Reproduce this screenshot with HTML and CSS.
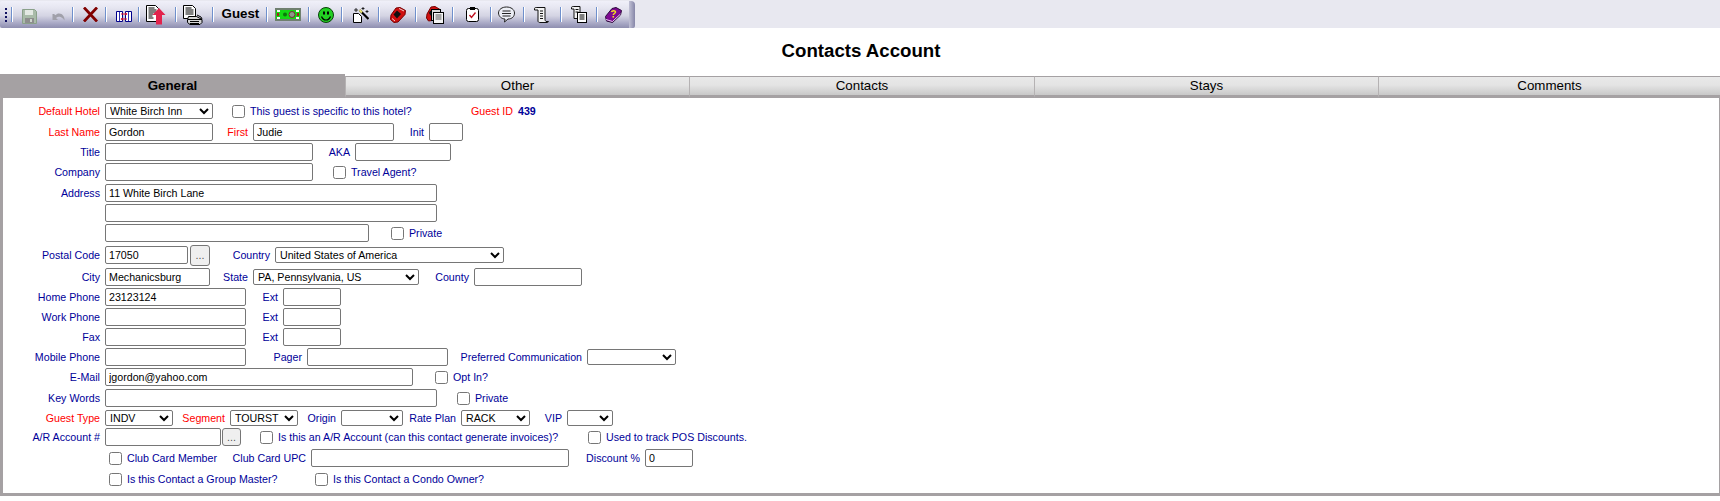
FILE: index.html
```html
<!DOCTYPE html>
<html lang="en">
<head>
<meta charset="utf-8">
<title>Contacts Account</title>
<link rel="stylesheet" href="styles.css">
</head>
<body>
<header class="topband">
  <nav class="toolbar">
    <span class="grip"><i></i><i></i><i></i><i></i></span>
    <span class="sep"></span>
    <span class="tool w59 spread">
      <svg class="low" width="15" height="15" viewBox="0 0 15 15"><path d="M.5.500h12l2 2v12H.5z" fill="#a9bba9" stroke="#8aa08a"/><rect x="3" y="1" width="8" height="5" fill="#e3e9e3"/><rect x="3" y="9" width="9" height="5" fill="#8d8d8d"/><rect x="8" y="10" width="2" height="3" fill="#cfd6cf"/></svg>
      <svg class="low" width="14" height="9" viewBox="0 0 14 9"><path d="M.5 2v6h5.500L4 6c2.500-2 6-1.500 8.500 2.500.5-3.500-2-7-5.500-7-1.500 0-2.500.6-3.500 1.800L2 2z" fill="#a0a0aa"/></svg>
    </span>
    <span class="sep"></span>
    <span class="tool w31 nudge-r">
      <svg width="15" height="15" viewBox="0 0 15 15"><path d="M1 .5l13 14M14 .5l-13 14" stroke="#800000" stroke-width="2.800" fill="none"/></svg>
    </span>
    <span class="sep"></span>
    <span class="tool w31 nudge-r">
      <svg class="low" width="16" height="11" viewBox="0 0 16 11"><path d="M.5.500h6v10h-6zM9.500.5h6v10h-6z" fill="#fff" stroke="#00008b"/><path d="M3.500 1v9M12.500 1v9" stroke="#3030b0"/><path d="M5 3h6M5 8h6" stroke="#e0102a"/><path d="M9.500 1.500l2 1.500-2 1.500zM6.500 6.500l-2 1.500 2 1.500z" fill="#e0102a"/></svg>
    </span>
    <span class="sep"></span>
    <span class="tool w35 nudge">
      <svg width="20" height="20" viewBox="0 0 20 20"><path d="M.5.500h9l3 3v13H.5z" fill="#fff" stroke="#000"/><path d="M2.500 3h6M2.500 5h8M2.500 7h8M2.500 9h5M2.500 11h4M2.500 13h5" stroke="#000"/><path d="M13 3l6.500 7H16v9.500h-6V10H6.500z" fill="#e2234c"/></svg>
    </span>
    <span class="sep"></span>
    <span class="tool w35 nudge-s">
      <svg width="20" height="20" viewBox="0 0 20 20"><path d="M.5.500h9l3 3v10H.5z" fill="#fff" stroke="#000"/><path d="M2.500 3h6M2.500 5h8M2.500 7h8M2.500 9h8" stroke="#000"/><path d="M5.500 11.500h8l5.500 3v3l-2 2H7l-2.500-2v-3z" fill="#d4d4d4" stroke="#000"/><path d="M5 14.500h14M7 16.500h9M7 18.500h9" stroke="#000"/><path d="M14 10l4 2 1 2" fill="none" stroke="#000"/></svg>
    </span>
    <span class="sep"></span>
    <span class="tool w52 guest">Guest</span>
    <span class="sep"></span>
    <span class="tool w40">
      <svg width="26" height="13" viewBox="0 0 26 13"><rect width="26" height="13" fill="#6f7f6f"/><rect x="1" y="2" width="24" height="9" fill="#14d814"/><path d="M2 2h3v2H2zM21 2h3v2h-3zM2 9h3v2H2zM21 9h3v2h-3z" fill="#f4f4f4"/><path d="M2 5h2v3H2zM22 5h2v3h-2z" fill="#a02020"/><circle cx="17" cy="6.500" r="3" fill="#8a9a8a" stroke="#703030"/><circle cx="10" cy="6.500" r="2" fill="#0a7a0a"/></svg>
    </span>
    <span class="sep"></span>
    <span class="tool w31">
      <svg width="16" height="16" viewBox="0 0 16 16"><circle cx="8" cy="8" r="7.500" fill="#22d022" stroke="#0a400a"/><rect x="5" y="4.500" width="2" height="3" fill="#000"/><rect x="9" y="4.500" width="2" height="3" fill="#000"/><path d="M3.500 9.500c1 2.500 2.500 3.500 4.500 3.500s3.500-1 4.500-3.500" fill="none" stroke="#000" stroke-width="1.200"/></svg>
    </span>
    <span class="sep"></span>
    <span class="tool w35">
      <svg width="16" height="16" viewBox="0 0 16 16"><path d="M.5 6.500h5l3 3v6h-8z" fill="#fff" stroke="#000"/><path d="M6.500 3l9 9" stroke="#000" stroke-width="2.200"/><path d="M6.500 3l2.500 2.500" stroke="#e8e070" stroke-width="2.200"/><path d="M3 1v4M1 3h4M10 0v3M8.500 1.500h3M14 3v3M12.500 4.500h3" stroke="#000" stroke-width=".8"/></svg>
    </span>
    <span class="sep"></span>
    <span class="tool w35">
      <svg width="16" height="16" viewBox="0 0 16 16"><path d="M6 1L10 .5l5.500 3-.5 4-7 7.500-4 .5-3.500-3 .5-4.500z" fill="#d01010" stroke="#700"/><path d="M7 3.500l4 3.500-4 4.500-3.500-4z" fill="#111"/><path d="M9 1.500l5 2.500M2 11.500l3 2.500" stroke="#fff" stroke-width=".8"/></svg>
    </span>
    <span class="sep"></span>
    <span class="tool w35">
      <svg width="18" height="18" viewBox="0 0 18 18"><path d="M5 1L9 .5l5 3-1 4-7 7-3.500.5L.5 12 1 8z" fill="#d01010" stroke="#700"/><path d="M4 5l3-1 1 3-3 3-2-3z" fill="#111"/><rect x="5.500" y="3.500" width="9" height="11" fill="#d8d8d8" stroke="#000"/><rect x="7.500" y="6.500" width="10" height="11" fill="#f4f4f4" stroke="#000"/><path d="M9.500 9h6M9.500 11h6M9.500 13h6" stroke="#555"/></svg>
    </span>
    <span class="sep"></span>
    <span class="tool w36">
      <svg width="13" height="15" viewBox="0 0 13 15"><rect x=".5" y="1.500" width="12" height="13" rx="2" fill="#fff" stroke="#000"/><rect x="4" y="0" width="5" height="3" fill="#000"/><path d="M3.500 8l2 2.500 4-5" fill="none" stroke="#c01020" stroke-width="1.400"/></svg>
    </span>
    <span class="sep"></span>
    <span class="tool w31 nudge-s">
      <svg width="17" height="17" viewBox="0 0 17 17"><path d="M8.500 1C4 1 .5 3.500.5 7s3.500 6 6.500 6l-.5 3 3.500-3c4 0 6.500-2.500 6.500-6s-3.500-6-8-6z" fill="#eceef5" stroke="#222"/><path d="M4.500 5h8M4 7.500h9M4.500 10h8" stroke="#222"/></svg>
    </span>
    <span class="sep"></span>
    <span class="tool w35 nudge-s">
      <svg width="15" height="16" viewBox="0 0 15 16"><path d="M.5 1.500C.5.500 2 .5 3 .5h8v12c0 1 .5 1.500 1 2h2.500c0 .5-.5 1-1.500 1H6c-1 0-2-.5-2-1.500V3H.5z" fill="#f4f4f4" stroke="#111"/><path d="M6 4h3M6 6.500h3M6 9h3M6 11.500h3" stroke="#111"/></svg>
    </span>
    <span class="sep"></span>
    <span class="tool w34">
      <svg width="16" height="17" viewBox="0 0 16 17"><path d="M.5 1.500C.5.500 2 .5 3 .5h6v12H3V3H.5z" fill="#f4f4f4" stroke="#111"/><path d="M4.500 3.500h3M4.500 6h3" stroke="#111"/><rect x="6.500" y="6.500" width="9" height="10" fill="#fff" stroke="#000"/><path d="M8.500 9h5M8.500 11h5M8.500 13h5" stroke="#000"/></svg>
    </span>
    <span class="sep"></span>
    <span class="tool w31">
      <svg width="17" height="16" viewBox="0 0 17 16"><path d="M7 1.500L11 .5l5.500 3-1 4.500L7.500 15.500 1.500 14 .5 9.500z" fill="#7e0a92" stroke="#2a0a3a"/><path d="M1 12.500l6.500 2L15.500 7" fill="none" stroke="#e8c8f0"/><path d="M6.500 5c.5-1.500 4-1.800 4 0 0 1.500-2.200 1.500-2.200 3" fill="none" stroke="#f5e020" stroke-width="1.500"/><rect x="7.500" y="9" width="1.600" height="1.600" fill="#f5e020"/></svg>
    </span>
    <span class="endcap"></span>
  </nav>
</header>

<h1 class="title">Contacts Account</h1>

<div class="tabs">
  <div class="tab active">General</div>
  <div class="tab">Other</div>
  <div class="tab">Contacts</div>
  <div class="tab">Stays</div>
  <div class="tab">Comments</div>
</div>

<form class="panel">
  <div class="row">
    <label class="cap req w97">Default Hotel</label>
    <select class="w108"><option>White Birch Inn</option></select>
    <input type="checkbox" class="ml19">
    <span class="text ml5 w162">This guest is specific to this hotel?</span>
    <label class="cap req w101">Guest ID</label>
    <span class="value">439</span>
  </div>
  <div class="row mt1">
    <label class="cap req w97">Last Name</label>
    <input type="text" class="w108" value="Gordon">
    <label class="cap req w35">First</label>
    <input type="text" class="w141" value="Judie">
    <label class="cap w30">Init</label>
    <input type="text" class="w34">
  </div>
  <div class="row">
    <label class="cap w97">Title</label>
    <input type="text" class="w208">
    <label class="cap w37">AKA</label>
    <input type="text" class="w96">
  </div>
  <div class="row">
    <label class="cap w97">Company</label>
    <input type="text" class="w208">
    <input type="checkbox" class="ml20">
    <span class="text ml5">Travel Agent?</span>
  </div>
  <div class="row mt1">
    <label class="cap w97">Address</label>
    <input type="text" class="w332" value="11 White Birch Lane">
  </div>
  <div class="row">
    <span class="cap w97"></span>
    <input type="text" class="w332">
  </div>
  <div class="row">
    <span class="cap w97"></span>
    <input type="text" class="w264">
    <input type="checkbox" class="ml22">
    <span class="text ml5">Private</span>
  </div>
  <div class="row mt2">
    <label class="cap w97">Postal Code</label>
    <input type="text" class="w83" value="17050">
    <button type="button" class="more ml2 w20 tall">...</button>
    <label class="cap w60">Country</label>
    <select class="w229"><option>United States of America</option></select>
  </div>
  <div class="row mt2">
    <label class="cap w97">City</label>
    <input type="text" class="w105" value="Mechanicsburg">
    <label class="cap w38">State</label>
    <select class="w166"><option>PA, Pennsylvania, US</option></select>
    <label class="cap w50">County</label>
    <input type="text" class="w108">
  </div>
  <div class="row">
    <label class="cap w97">Home Phone</label>
    <input type="text" class="w141" value="23123124">
    <label class="cap w32">Ext</label>
    <input type="text" class="w58">
  </div>
  <div class="row">
    <label class="cap w97">Work Phone</label>
    <input type="text" class="w141">
    <label class="cap w32">Ext</label>
    <input type="text" class="w58">
  </div>
  <div class="row">
    <label class="cap w97">Fax</label>
    <input type="text" class="w141">
    <label class="cap w32">Ext</label>
    <input type="text" class="w58">
  </div>
  <div class="row">
    <label class="cap w97">Mobile Phone</label>
    <input type="text" class="w141">
    <label class="cap w56">Pager</label>
    <input type="text" class="w141">
    <label class="cap w134">Preferred Communication</label>
    <select class="w89"><option></option></select>
  </div>
  <div class="row">
    <label class="cap w97">E-Mail</label>
    <input type="text" class="w308" value="jgordon@yahoo.com">
    <input type="checkbox" class="ml22">
    <span class="text ml5">Opt In?</span>
  </div>
  <div class="row mt1">
    <label class="cap w97">Key Words</label>
    <input type="text" class="w332">
    <input type="checkbox" class="ml20">
    <span class="text ml5">Private</span>
  </div>
  <div class="row short mt1">
    <label class="cap req w97">Guest Type</label>
    <select class="w68"><option>INDV</option></select>
    <label class="cap req w52">Segment</label>
    <select class="w68"><option>TOURST</option></select>
    <label class="cap w38">Origin</label>
    <select class="w62"><option></option></select>
    <label class="cap w53">Rate Plan</label>
    <select class="w69"><option>RACK</option></select>
    <label class="cap w32">VIP</label>
    <select class="w46"><option></option></select>
  </div>
  <div class="row">
    <label class="cap w97">A/R Account #</label>
    <input type="text" class="w116">
    <button type="button" class="more ml1 w19">...</button>
    <input type="checkbox" class="ml19">
    <span class="text ml5 w280">Is this an A/R Account (can this contact generate invoices)?</span>
    <input type="checkbox" class="ml30">
    <span class="text ml5">Used to track POS Discounts.</span>
  </div>
  <div class="row mt1">
    <input type="checkbox" class="ml106">
    <span class="text ml5 w90">Club Card Member</span>
    <label class="cap w89">Club Card UPC</label>
    <input type="text" class="w258">
    <label class="cap w71">Discount %</label>
    <input type="text" class="w48" value="0">
  </div>
  <div class="row mt1">
    <input type="checkbox" class="ml106">
    <span class="text ml5 w151">Is this Contact a Group Master?</span>
    <input type="checkbox" class="ml37">
    <span class="text ml5">Is this Contact a Condo Owner?</span>
  </div>
</form>
</body>
</html>
```

FILE: styles.css
```css
* { box-sizing: border-box; }

html, body {
  margin: 0;
  background: #fff;
  overflow: hidden;
}

body {
  font-family: "Liberation Sans", Arial, sans-serif;
  font-size: 10.67px;
  color: #000099;
}

/* toolbar */
.topband {
  height: 28px;
  padding-top: 1px;
  background: #e8e8f0;
}

.toolbar {
  display: flex;
  align-items: center;
  width: 635px;
  height: 27px;
  background: linear-gradient(#f0f0f9 0, #e6e6f1 25%, #d4d4e3 55%, #a4a4c2 85%, #8f8fb0 100%);
  border-radius: 2px;
}

.grip {
  display: flex;
  flex-direction: column;
  gap: 2px;
  width: 13px;
  padding-left: 5px;
}

.grip i {
  width: 2px;
  height: 2px;
  background: #101060;
}

.sep {
  flex: none;
  width: 2px;
  height: 15px;
  background: #6f90cc;
  border-right: 1px solid #fff;
}

.tool {
  flex: none;
  display: flex;
  align-items: center;
  justify-content: center;
  height: 27px;
}

.tool svg { display: block; }

.tool svg.low { margin-top: 3px; }

.spread {
  justify-content: flex-start;
  gap: 15px;
  padding-left: 9px;
}

.nudge { padding-right: 4px; }
.nudge-s { padding-right: 3px; }
.nudge-r { padding-left: 2px; }

.guest {
  font-size: 13.33px;
  font-weight: bold;
  color: #000;
  padding-bottom: 2px;
}

.endcap {
  margin-left: auto;
  width: 7px;
  height: 27px;
  background: linear-gradient(90deg, #c0c0d4, #8686a8);
  border-radius: 0 4px 4px 0;
}

.w31 { width: 31px; }
.w34 { width: 34px; }
.w35 { width: 35px; }
.w36 { width: 36px; }
.w40 { width: 40px; }
.w52 { width: 52px; }
.w59 { width: 59px; }

/* heading */
.title {
  margin: 0;
  height: 46px;
  padding-left: 2px;
  font-size: 18.67px;
  line-height: 45px;
  font-weight: bold;
  text-align: center;
  color: #000;
}

/* tabs */
.tabs {
  display: grid;
  grid-template-columns: 345px 344px 345px 344px 1fr;
  height: 24px;
}

.tab {
  margin-top: 2px;
  padding-bottom: 1px;
  font-size: 13.33px;
  line-height: 17px;
  text-align: center;
  color: #000;
  background: linear-gradient(#e9e9e9, #e4e4e4 45%, #c8c8c8);
  border-top: 1px solid #a5a1a3;
  border-bottom: 3px solid #a5a1a3;
  border-left: 1px solid #b5b2b3;
}

.tab.active {
  margin-top: 0;
  padding-top: 3px;
  font-weight: bold;
  background: #a5a1a3;
  border: 0;
}

/* form */
.panel {
  display: flex;
  flex-direction: column;
  padding: 3px 0 4px;
  border: solid #a5a1a3;
  border-width: 0 1px 3px 3px;
}

.row {
  display: flex;
  align-items: center;
  height: 20px;
}

.row.short { height: 18px; }

.mt1 { margin-top: 1px; }
.mt2 { margin-top: 2px; }

.cap {
  flex: none;
  margin-right: 5px;
  text-align: right;
  white-space: nowrap;
}

.req { color: #f00; }

.text {
  flex: none;
  white-space: nowrap;
}

.value {
  font-weight: bold;
  color: #000099;
}

input[type="text"], select, button {
  flex: none;
  font-family: "Liberation Sans", Arial, sans-serif;
  font-size: 10.67px;
  color: #000;
}

input[type="text"] {
  height: 18px;
  padding: 1px 3px;
  background: #fff;
  border: 1px solid #767676;
  border-radius: 2px;
}

select {
  height: 16px;
  padding: 0;
  background: #fff;
  border: 1px solid #767676;
  border-radius: 2px;
}

input[type="checkbox"] {
  flex: none;
  width: 13px;
  height: 13px;
  margin-top: 0;
  margin-bottom: 0;
  margin-right: 0;
}

.more {
  height: 18px;
  padding: 0;
  color: #555;
  background: #efefef;
  border: 1px solid #767676;
  border-radius: 3px;
}

.more.tall { height: 21px; }

.w19 { width: 19px; }
.w20 { width: 20px; }
.w30 { width: 30px; }
.w32 { width: 32px; }
.w37 { width: 37px; }
.w38 { width: 38px; }
.w46 { width: 46px; }
.w48 { width: 48px; }
.w50 { width: 50px; }
.w53 { width: 53px; }
.w56 { width: 56px; }
.w58 { width: 58px; }
.w60 { width: 60px; }
.w62 { width: 62px; }
.w68 { width: 68px; }
.w69 { width: 69px; }
.w71 { width: 71px; }
.w83 { width: 83px; }
.w89 { width: 89px; }
.w90 { width: 90px; }
.w96 { width: 96px; }
.w97 { width: 97px; }
.w101 { width: 101px; }
.w105 { width: 105px; }
.w108 { width: 108px; }
.w116 { width: 116px; }
.w134 { width: 134px; }
.w141 { width: 141px; }
.w151 { width: 151px; }
.w162 { width: 162px; }
.w166 { width: 166px; }
.w208 { width: 208px; }
.w229 { width: 229px; }
.w258 { width: 258px; }
.w264 { width: 264px; }
.w280 { width: 280px; }
.w308 { width: 308px; }
.w332 { width: 332px; }

.ml1 { margin-left: 1px; }
.ml2 { margin-left: 2px; }
.ml5 { margin-left: 5px; }
.ml19 { margin-left: 19px; }
.ml20 { margin-left: 20px; }
.ml22 { margin-left: 22px; }
.ml30 { margin-left: 30px; }
.ml37 { margin-left: 37px; }
.ml106 { margin-left: 106px; }
```
